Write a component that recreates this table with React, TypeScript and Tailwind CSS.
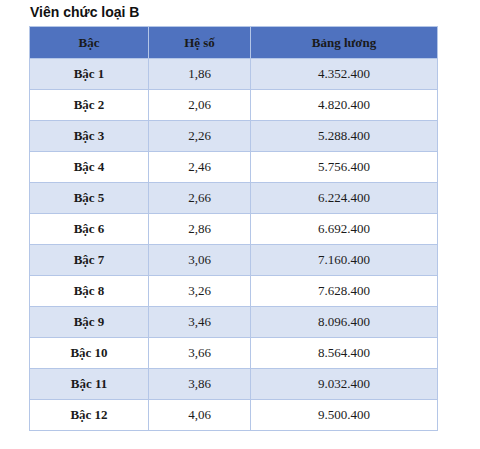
import React from 'react';

const rows = [
  ['1,86', '4.352.400'],
  ['2,06', '4.820.400'],
  ['2,26', '5.288.400'],
  ['2,46', '5.756.400'],
  ['2,66', '6.224.400'],
  ['2,86', '6.692.400'],
  ['3,06', '7.160.400'],
  ['3,26', '7.628.400'],
  ['3,46', '8.096.400'],
  ['3,66', '8.564.400'],
  ['3,86', '9.032.400'],
  ['4,06', '9.500.400'],
];

export default function App() {
  return (
    <div className="w-[480px] h-[449px] bg-white pl-[29px] pt-[4px]">
      {/* Title */}
      <h2 className="h-[22px] pl-[1px] text-[14px] font-bold leading-[17px] text-[#111] font-['Liberation_Sans',Arial,sans-serif]">
        Viên chức loại B
      </h2>

      {/* Salary table */}
      <table className="w-[409px] border-collapse text-[13px] text-[#1a1a1a] font-['Liberation_Serif','Times_New_Roman',serif]">
        <thead>
          <tr className="h-[32px] bg-[#4f72bf]">
            <th className="w-[119px] border border-[#b4c6e7] font-bold">Bậc</th>
            <th className="w-[102px] border border-[#b4c6e7] font-bold">Hệ số</th>
            <th className="border border-[#b4c6e7] font-bold">Bảng lương</th>
          </tr>
        </thead>
        <tbody>
          {rows.map(([coef, pay], i) => (
            <tr key={i} className={`h-[31px] ${i % 2 === 0 ? 'bg-[#dae3f3]' : 'bg-white'}`}>
              <td className="border border-[#b4c6e7] text-center font-bold">Bậc {i + 1}</td>
              <td className="border border-[#b4c6e7] text-center">{coef}</td>
              <td className="border border-[#b4c6e7] text-center">{pay}</td>
            </tr>
          ))}
        </tbody>
      </table>
    </div>
  );
}
